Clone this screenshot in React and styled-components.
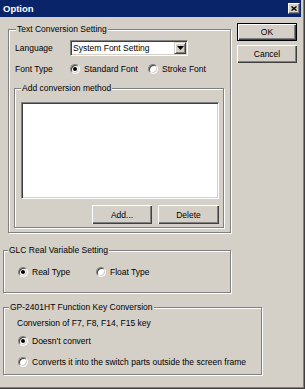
import React from 'react';
import styled, { createGlobalStyle } from 'styled-components';

const GlobalStyle = createGlobalStyle`
  html, body {
    margin: 0;
    padding: 0;
    background: #d4d0c8;
  }
  body {
    font-family: 'Liberation Sans', Arial, sans-serif;
    font-size: 8.5px;
    color: #000;
  }
`;

const Window = styled.div`
  box-sizing: border-box;
  width: 305px;
  height: 389px;
  background: #d4d0c8;
  border-right: 1px solid #404040;
  border-bottom: 1px solid #404040;
  box-shadow: inset -1px -1px 0 #808080;
  padding: 0 3px 3px 0;
  display: flex;
  flex-direction: column;
`;

const TitleBar = styled.div`
  flex-shrink: 0;
  height: 17px;
  background: #0a246a;
  display: flex;
  align-items: center;
  justify-content: space-between;
  padding: 0 1px 0 3px;
`;

const Title = styled.span`
  color: #fff;
  font-weight: bold;
  font-size: 9.5px;
  line-height: 17px;
`;

const CloseButton = styled.div`
  box-sizing: border-box;
  width: 12px;
  height: 11px;
  background: #d4d0c8;
  border-top: 1px solid #fff;
  border-left: 1px solid #fff;
  border-right: 1px solid #404040;
  border-bottom: 1px solid #404040;
  box-shadow: inset -1px -1px 0 #808080;
  display: flex;
  align-items: center;
  justify-content: center;
`;

const TopRow = styled.div`
  display: flex;
  align-items: flex-start;
`;

const Group = styled.div`
  position: relative;
  box-sizing: border-box;
  flex-shrink: 0;
  width: ${({ $w }) => $w}px;
  height: ${({ $h }) => $h}px;
  margin: ${({ $m }) => $m};
  padding: ${({ $pad }) => $pad};
  border: 1px solid #808080;
  box-shadow: 1px 1px 0 #fff, inset 1px 1px 0 #fff;
  display: flex;
  flex-direction: column;
`;

const Caption = styled.span`
  position: absolute;
  top: -7px;
  left: ${({ $left }) => $left}px;
  padding: 0 1px;
  background: #d4d0c8;
  line-height: 12px;
  white-space: nowrap;
`;

const Row = styled.div`
  display: flex;
  align-items: center;
  height: ${({ $h }) => $h || 12}px;
  margin: ${({ $m }) => $m || '0'};
  white-space: nowrap;
`;

const FieldLabel = styled.span`
  width: 55px;
  flex-shrink: 0;
`;

const Select = styled.div`
  box-sizing: border-box;
  width: 118px;
  height: 16px;
  padding: 1px;
  background: #fff;
  border: 1px solid;
  border-color: #808080 #fff #fff #808080;
  box-shadow: inset 1px 1px 0 #404040, inset -1px -1px 0 #d4d0c8;
  display: flex;
  align-items: center;
`;

const SelectText = styled.span`
  flex: 1;
  padding-left: 1px;
`;

const DropButton = styled.span`
  box-sizing: border-box;
  width: 12px;
  height: 12px;
  background: #d4d0c8;
  border-top: 1px solid #d4d0c8;
  border-left: 1px solid #d4d0c8;
  border-right: 1px solid #404040;
  border-bottom: 1px solid #404040;
  box-shadow: inset 1px 1px 0 #fff, inset -1px -1px 0 #808080;
  display: flex;
  align-items: center;
  justify-content: center;
`;

const RadioItem = styled.label`
  display: flex;
  align-items: center;
  width: ${({ $w }) => ($w ? `${$w}px` : 'auto')};
  flex-shrink: 0;
`;

const RadioCircle = styled.span`
  box-sizing: border-box;
  width: 10px;
  height: 10px;
  margin-right: 4px;
  border-radius: 50%;
  background: #fff;
  border: 1px solid;
  border-color: #808080 #fff #fff #808080;
  box-shadow: inset 1px 1px 0 #404040, inset -1px -1px 0 #d4d0c8;
  display: flex;
  align-items: center;
  justify-content: center;

  &::after {
    content: '';
    width: 4px;
    height: 4px;
    border-radius: 50%;
    background: ${({ $checked }) => ($checked ? '#000' : 'transparent')};
  }
`;

const ListBox = styled.div`
  box-sizing: border-box;
  width: 198px;
  height: 97px;
  background: #fff;
  border: 1px solid;
  border-color: #808080 #fff #fff #808080;
  box-shadow: inset 1px 1px 0 #404040, inset -1px -1px 0 #d4d0c8;
`;

const ButtonRow = styled.div`
  display: flex;
  justify-content: flex-end;
  gap: 6px;
  width: 198px;
  margin-top: 6px;
`;

const ButtonColumn = styled.div`
  display: flex;
  flex-direction: column;
  gap: 4px;
  margin: 6px 0 0 6px;
`;

const Button = styled.button`
  box-sizing: border-box;
  width: ${({ $w }) => $w}px;
  height: ${({ $h }) => $h}px;
  padding: 0;
  margin: 0;
  background: #d4d0c8;
  font: inherit;
  color: #000;
  border: ${({ $default }) => ($default ? '1px solid #000' : 'none')};
  box-shadow: inset 1px 1px 0 #fff, inset -1px -1px 0 #404040,
    inset -2px -2px 0 #808080;
`;

const Radio = ({ checked, width, children }) => (
  <RadioItem $w={width}>
    <RadioCircle $checked={checked} />
    {children}
  </RadioItem>
);

const App = () => {
  return (
    <>
      <GlobalStyle />
      <Window>
        <TitleBar>
          <Title>Option</Title>
          <CloseButton>
            <svg width="6" height="5" viewBox="0 0 6 5">
              <path d="M0.5 0.5 L5.5 4.5 M5.5 0.5 L0.5 4.5" stroke="#000" strokeWidth="1.4" />
            </svg>
          </CloseButton>
        </TitleBar>

        <TopRow>
          <Group $w={223} $h={204} $m="12px 0 0 8px" $pad="10px 0 0 0">
            <Caption $left={7}>Text Conversion Setting</Caption>
            <Row $h={16} $m="0 0 0 6px">
              <FieldLabel>Language</FieldLabel>
              <Select>
                <SelectText>System Font Setting</SelectText>
                <DropButton>
                  <svg width="7" height="4" viewBox="0 0 7 4">
                    <path d="M0 0 H7 L3.5 4 Z" fill="#000" />
                  </svg>
                </DropButton>
              </Select>
            </Row>
            <Row $h={14} $m="6px 0 0 6px">
              <FieldLabel>Font Type</FieldLabel>
              <Radio checked width={78}>Standard Font</Radio>
              <Radio>Stroke Font</Radio>
            </Row>

            <Group $w={210} $h={140} $m="12px 0 0 5px" $pad="13px 0 0 6px">
              <Caption $left={6}>Add conversion method</Caption>
              <ListBox />
              <ButtonRow>
                <Button $w={60} $h={19}>Add...</Button>
                <Button $w={61} $h={19}>Delete</Button>
              </ButtonRow>
            </Group>
          </Group>

          <ButtonColumn>
            <Button $w={60} $h={18} $default>OK</Button>
            <Button $w={60} $h={18}>Cancel</Button>
          </ButtonColumn>
        </TopRow>

        <Group $w={228} $h={43} $m="17px 0 0 3px" $pad="15px 0 0 14px">
          <Caption $left={4}>GLC Real Variable Setting</Caption>
          <Row>
            <Radio checked width={78}>Real Type</Radio>
            <Radio>Float Type</Radio>
          </Row>
        </Group>

        <Group $w={259} $h={68} $m="14px 0 0 3px" $pad="9px 0 0 13px">
          <Caption $left={5}>GP-2401HT Function Key Conversion</Caption>
          <Row>Conversion of F7, F8, F14, F15 key</Row>
          <Row $m="6px 0 0 1px">
            <Radio checked>Doesn't convert</Radio>
          </Row>
          <Row $m="9px 0 0 1px">
            <Radio>Converts it into the switch parts outside the screen frame</Radio>
          </Row>
        </Group>
      </Window>
    </>
  );
};

export default App;
